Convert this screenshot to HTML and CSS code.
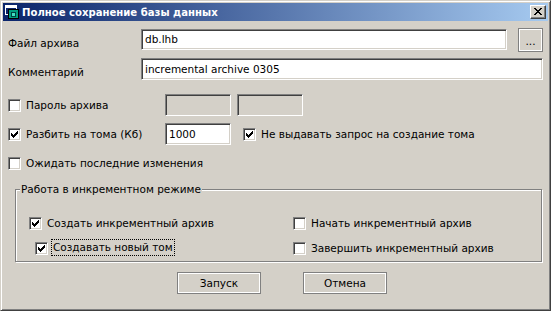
FILE: index.html
```html
<!DOCTYPE html>
<html lang="ru">
<head>
<meta charset="utf-8">
<title>Полное сохранение базы данных</title>
<link rel="stylesheet" href="styles.css">
</head>
<body>
<div class="window">
  <div class="titlebar">
    <svg class="app-icon" width="16" height="16" viewBox="0 0 16 16" shape-rendering="crispEdges">
      <rect x="1" y="1" width="11" height="9" fill="#0a246a" stroke="#ffffff" stroke-width="1"/>
      <rect x="1.5" y="1.5" width="10" height="2" fill="#ffffff"/>
      <rect x="4" y="5" width="11" height="10" fill="#000000"/>
      <rect x="5" y="6" width="9" height="8" fill="#00a080"/>
      <rect x="7" y="8" width="5" height="5" fill="#004040"/>
      <rect x="8" y="9" width="3" height="3" fill="#40e0c0"/>
    </svg>
    <span class="title">Полное сохранение базы данных</span>
    <div class="close-btn">
      <svg width="8" height="7" viewBox="0 0 8 7" shape-rendering="crispEdges">
        <path d="M0 0h2v1h-2z M6 0h2v1h-2z M1 1h2v1h-2z M5 1h2v1h-2z M2 2h4v1h-4z M3 3h2v1h-2z M2 4h4v1h-4z M1 5h2v1h-2z M5 5h2v1h-2z M0 6h2v1h-2z M6 6h2v1h-2z" fill="#000"/>
      </svg>
    </div>
  </div>

  <div class="content">
    <div class="row row-file">
      <span class="lbl lbl-file">Файл архива</span>
      <div class="field field-file">db.lhb</div>
      <div class="btn btn-browse">...</div>
    </div>

    <div class="row row-comment">
      <span class="lbl lbl-comment">Комментарий</span>
      <div class="field field-comment">incremental archive 0305</div>
    </div>

    <div class="row row-opt row-pass">
      <div class="chk-item cell-opt">
        <span class="chk"></span>
        <span>Пароль архива</span>
      </div>
      <div class="field field-small disabled"></div>
      <div class="field field-small disabled gap6"></div>
    </div>

    <div class="row row-opt">
      <div class="chk-item cell-opt">
        <span class="chk checked"><svg width="7" height="7" viewBox="0 0 7 7" shape-rendering="crispEdges"><path d="M6 0h1v3h-1zM5 1h1v3h-1zM4 2h1v3h-1zM3 3h1v3h-1zM2 4h1v3h-1zM1 3h1v3h-1zM0 2h1v3h-1z" fill="#000"/></svg></span>
        <span>Разбить на тома (Кб)</span>
      </div>
      <div class="field field-small">1000</div>
      <div class="chk-item no-prompt">
        <span class="chk checked"><svg width="7" height="7" viewBox="0 0 7 7" shape-rendering="crispEdges"><path d="M6 0h1v3h-1zM5 1h1v3h-1zM4 2h1v3h-1zM3 3h1v3h-1zM2 4h1v3h-1zM1 3h1v3h-1zM0 2h1v3h-1z" fill="#000"/></svg></span>
        <span>Не выдавать запрос на создание тома</span>
      </div>
    </div>

    <div class="row row-opt">
      <div class="chk-item">
        <span class="chk"></span>
        <span>Ожидать последние изменения</span>
      </div>
    </div>

    <div class="group">
      <span class="group-label">Работа в инкрементном режиме</span>
      <div class="group-grid">
        <div class="chk-item">
          <span class="chk checked"><svg width="7" height="7" viewBox="0 0 7 7" shape-rendering="crispEdges"><path d="M6 0h1v3h-1zM5 1h1v3h-1zM4 2h1v3h-1zM3 3h1v3h-1zM2 4h1v3h-1zM1 3h1v3h-1zM0 2h1v3h-1z" fill="#000"/></svg></span>
          <span>Создать инкрементный архив</span>
        </div>
        <div class="chk-item">
          <span class="chk"></span>
          <span>Начать инкрементный архив</span>
        </div>
        <div class="chk-item indent">
          <span class="chk checked"><svg width="7" height="7" viewBox="0 0 7 7" shape-rendering="crispEdges"><path d="M6 0h1v3h-1zM5 1h1v3h-1zM4 2h1v3h-1zM3 3h1v3h-1zM2 4h1v3h-1zM1 3h1v3h-1zM0 2h1v3h-1z" fill="#000"/></svg></span>
          <span class="focus">Создавать новый том</span>
        </div>
        <div class="chk-item">
          <span class="chk"></span>
          <span>Завершить инкрементный архив</span>
        </div>
      </div>
    </div>

    <div class="buttons">
      <div class="btn btn-action">Запуск</div>
      <div class="btn btn-action">Отмена</div>
    </div>
  </div>
</div>
</body>
</html>
```

FILE: styles.css
```css
html, body {
  margin: 0;
  padding: 0;
  background: #d4d0c8;
}

.window {
  width: 551px;
  height: 311px;
  box-sizing: border-box;
  background: #d4d0c8;
  border: 1px solid;
  border-color: #d4d0c8 #404040 #404040 #d4d0c8;
  box-shadow: inset 1px 1px 0 #ffffff, inset -1px -1px 0 #808080;
  padding: 2px;
  font-family: "DejaVu Sans", sans-serif;
  font-size: 10.5px;
  line-height: 13px;
  color: #000;
  display: flex;
  flex-direction: column;
  overflow: hidden;
}

/* Title bar */
.titlebar {
  height: 18px;
  flex: none;
  display: flex;
  align-items: center;
  padding: 0 2px 0 1px;
  background: linear-gradient(to right, #0a246a, #a6caf0);
}

.app-icon {
  display: block;
  flex: none;
}

.title {
  margin-left: 2px;
  color: #ffffff;
  font-weight: bold;
  font-size: 10.1px;
  flex: 1;
  white-space: nowrap;
}

.close-btn {
  width: 16px;
  height: 14px;
  box-sizing: border-box;
  background: #d4d0c8;
  border: 1px solid;
  border-color: #ffffff #404040 #404040 #ffffff;
  box-shadow: inset -1px -1px 0 #808080;
  display: flex;
  align-items: center;
  justify-content: center;
  padding: 0 1px 1px 0;
}

.close-btn svg {
  display: block;
}

/* Content */
.content {
  padding-left: 5px;
  display: flex;
  flex-direction: column;
}

.row {
  display: flex;
  flex: none;
}

.row-file {
  margin-top: 7px;
  height: 24px;
}

.row-comment {
  margin-top: 6px;
  height: 22px;
}

.lbl {
  width: 133px;
  flex: none;
}

.lbl-file {
  padding-top: 9px;
}

.lbl-comment {
  padding-top: 8px;
}

.field {
  box-sizing: border-box;
  height: 22px;
  background: #ffffff;
  border: 1px solid;
  border-color: #808080 #ffffff #ffffff #808080;
  box-shadow: inset 1px 1px 0 #404040, inset -1px -1px 0 #d4d0c8;
  padding: 4px 3px 0 3px;
  white-space: nowrap;
  overflow: hidden;
  flex: none;
}

.field.disabled {
  background: #d4d0c8;
}

.field-file {
  width: 366px;
  height: 21px;
  margin-top: 1px;
  padding-top: 3px;
}

.field-comment {
  width: 402px;
}

.btn {
  box-sizing: border-box;
  background: #d4d0c8;
  border: 1px solid #808080;
  box-shadow: inset 0 0 0 1px #ffffff;
  display: flex;
  align-items: center;
  justify-content: center;
  flex: none;
}

.btn-browse {
  width: 25px;
  height: 24px;
  margin-left: 11px;
  padding-top: 2px;
}

.row-opt {
  margin-top: 7px;
  height: 22px;
  align-items: center;
}

.row-pass {
  margin-top: 14px;
}

.chk-item {
  display: flex;
  align-items: center;
  gap: 5px;
  white-space: nowrap;
}

.cell-opt {
  width: 157px;
  flex: none;
  align-self: stretch;
}

.gap6 {
  margin-left: 6px;
}

.field-small {
  width: 66px;
}

.no-prompt {
  margin-left: 12px;
}

.chk {
  width: 13px;
  height: 13px;
  box-sizing: border-box;
  flex: none;
  background: #ffffff;
  border: 1px solid;
  border-color: #808080 #ffffff #ffffff #808080;
  box-shadow: inset 1px 1px 0 #404040, inset -1px -1px 0 #d4d0c8;
  display: flex;
  align-items: center;
  justify-content: center;
}

.chk svg {
  display: block;
}

/* Group box */
.group {
  position: relative;
  margin-top: 15px;
  margin-left: 7px;
  width: 527px;
  height: 73px;
  box-sizing: border-box;
  border: 1px solid #808080;
  box-shadow: inset 1px 1px 0 #ffffff, 1px 1px 0 #ffffff;
  padding: 27px 0 0 13px;
  flex: none;
}

.group-label {
  position: absolute;
  left: 4px;
  top: -7px;
  padding: 0 1px;
  background: #d4d0c8;
  white-space: nowrap;
}

.group-grid {
  display: grid;
  grid-template-columns: 264px 1fr;
  grid-auto-rows: 13px;
  row-gap: 12px;
}

.indent {
  margin-left: 6px;
}

.focus {
  outline: 1px dotted #000000;
  outline-offset: 1px;
  margin-top: -3px;
}

/* Buttons */
.buttons {
  display: flex;
  gap: 42px;
  margin-top: 10px;
  margin-left: 169px;
}

.btn-action {
  width: 84px;
  height: 22px;
}
```
